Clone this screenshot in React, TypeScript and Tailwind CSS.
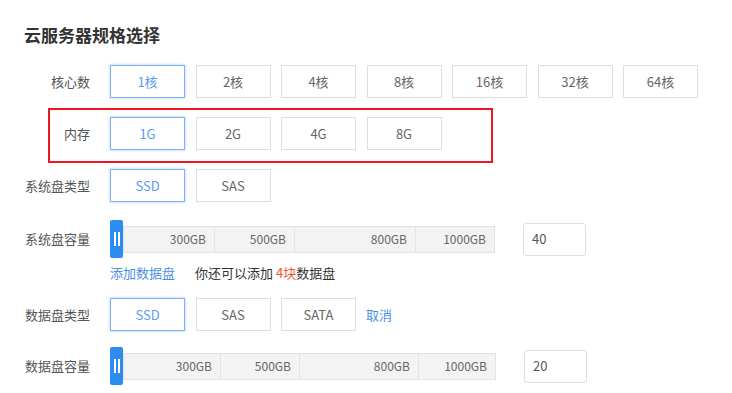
import React, { useState } from 'react';

const font = { fontFamily: '"Microsoft YaHei", "Noto Sans CJK SC", "Noto Sans", sans-serif' };

interface OptionRowProps {
  label: string;
  options: string[];
  value: string;
  onChange: (v: string) => void;
  extra?: React.ReactNode;
}

function OptionButtons({ options, value, onChange }: Omit<OptionRowProps, 'label' | 'extra'>) {
  return (
    <div className="flex gap-[10.5px]">
      {options.map((opt) => (
        <button
          key={opt}
          onClick={() => onChange(opt)}
          className={
            opt === value
              ? 'w-[75px] h-[33px] border border-[#7fb2f5] text-[#5b9bef] text-[13px] bg-white shadow-[0_0_3px_rgba(74,144,226,0.45)]'
              : 'w-[75px] h-[33px] border border-[#dedede] text-[#666] text-[13px] bg-white'
          }
        >
          {opt}
        </button>
      ))}
    </div>
  );
}

function Label({ children }: { children: React.ReactNode }) {
  return <div className="w-[66px] shrink-0 text-right text-[13px] text-[#555]">{children}</div>;
}

interface SliderProps {
  segments: { label: string; width: number }[];
  value: string;
}

function Slider({ segments, value }: SliderProps) {
  return (
    <div className="flex items-center h-[38px]">
      <div className="relative flex items-center h-[38px]">
        {/* handle */}
        <div className="absolute left-0 top-0 h-[38px] w-[13px] bg-[#2d8cf0] rounded-[2px] flex items-center justify-center gap-[2px] z-10">
          <div className="w-[2px] h-[14px] bg-white"></div>
          <div className="w-[2px] h-[14px] bg-white"></div>
        </div>
        <div className="flex h-[27px] ml-[13px] bg-[#f3f3f3] border border-[#e2e2e2]">
          {segments.map((s, i) => (
            <div
              key={s.label}
              style={{ width: s.width }}
              className={
                i === 0
                  ? 'h-full flex items-center justify-end pr-[8px] text-[12px] text-[#666]'
                  : 'h-full flex items-center justify-end pr-[8px] text-[12px] text-[#666] border-l border-[#e2e2e2]'
              }
            >
              {s.label}
            </div>
          ))}
        </div>
      </div>
      <div className="ml-[28px] w-[63px] h-[33px] border border-[#dedede] rounded-[3px] flex items-center pl-[8px] text-[13px] text-[#555]">
        {value}
      </div>
    </div>
  );
}

export default function App() {
  const [cpu, setCpu] = useState('1核');
  const [mem, setMem] = useState('1G');
  const [sysDisk, setSysDisk] = useState('SSD');
  const [dataDisk, setDataDisk] = useState('SSD');

  return (
    <div className="w-[732px] h-[393px] bg-white pl-[24px] pt-[23px]" style={font}>
      <h2 className="text-[17px] leading-[24px] font-bold text-[#333]">云服务器规格选择</h2>

      {/* 核心数 */}
      <div className="mt-[18px] flex items-center gap-[20px]">
        <Label>核心数</Label>
        <OptionButtons options={['1核', '2核', '4核', '8核', '16核', '32核', '64核']} value={cpu} onChange={setCpu} />
      </div>

      {/* 内存 */}
      <div className="relative mt-[19px] flex items-center gap-[20px]">
        <div className="absolute left-[24px] top-[-9px] w-[445px] h-[55px] border-2 border-[#f0141e] pointer-events-none"></div>
        <Label>内存</Label>
        <OptionButtons options={['1G', '2G', '4G', '8G']} value={mem} onChange={setMem} />
      </div>

      {/* 系统盘类型 */}
      <div className="mt-[19px] flex items-center gap-[20px]">
        <Label>系统盘类型</Label>
        <OptionButtons options={['SSD', 'SAS']} value={sysDisk} onChange={setSysDisk} />
      </div>

      {/* 系统盘容量 */}
      <div className="mt-[18px] flex items-center gap-[20px]">
        <Label>系统盘容量</Label>
        <Slider
          value="40"
          segments={[
            { label: '300GB', width: 90 },
            { label: '500GB', width: 80 },
            { label: '800GB', width: 121 },
            { label: '1000GB', width: 79 },
          ]}
        />
      </div>

      <div className="mt-[5px] flex items-center h-[20px] text-[13px]">
        <div className="w-[86px] shrink-0"></div>
        <button className="text-[#4a90e2]">添加数据盘</button>
        <span className="ml-[20px] text-[#333]">
          你还可以添加 <span className="text-[#f5502e]">4块</span>数据盘
        </span>
      </div>

      {/* 数据盘类型 */}
      <div className="mt-[15px] flex items-center gap-[20px]">
        <Label>数据盘类型</Label>
        <OptionButtons options={['SSD', 'SAS', 'SATA']} value={dataDisk} onChange={setDataDisk} />
        <button className="-ml-[10px] text-[13px] text-[#4a90e2]">取消</button>
      </div>

      {/* 数据盘容量 */}
      <div className="mt-[16px] flex items-center gap-[20px]">
        <Label>数据盘容量</Label>
        <Slider
          value="20"
          segments={[
            { label: '300GB', width: 96 },
            { label: '500GB', width: 79 },
            { label: '800GB', width: 119 },
            { label: '1000GB', width: 77 },
          ]}
        />
      </div>
    </div>
  );
}
